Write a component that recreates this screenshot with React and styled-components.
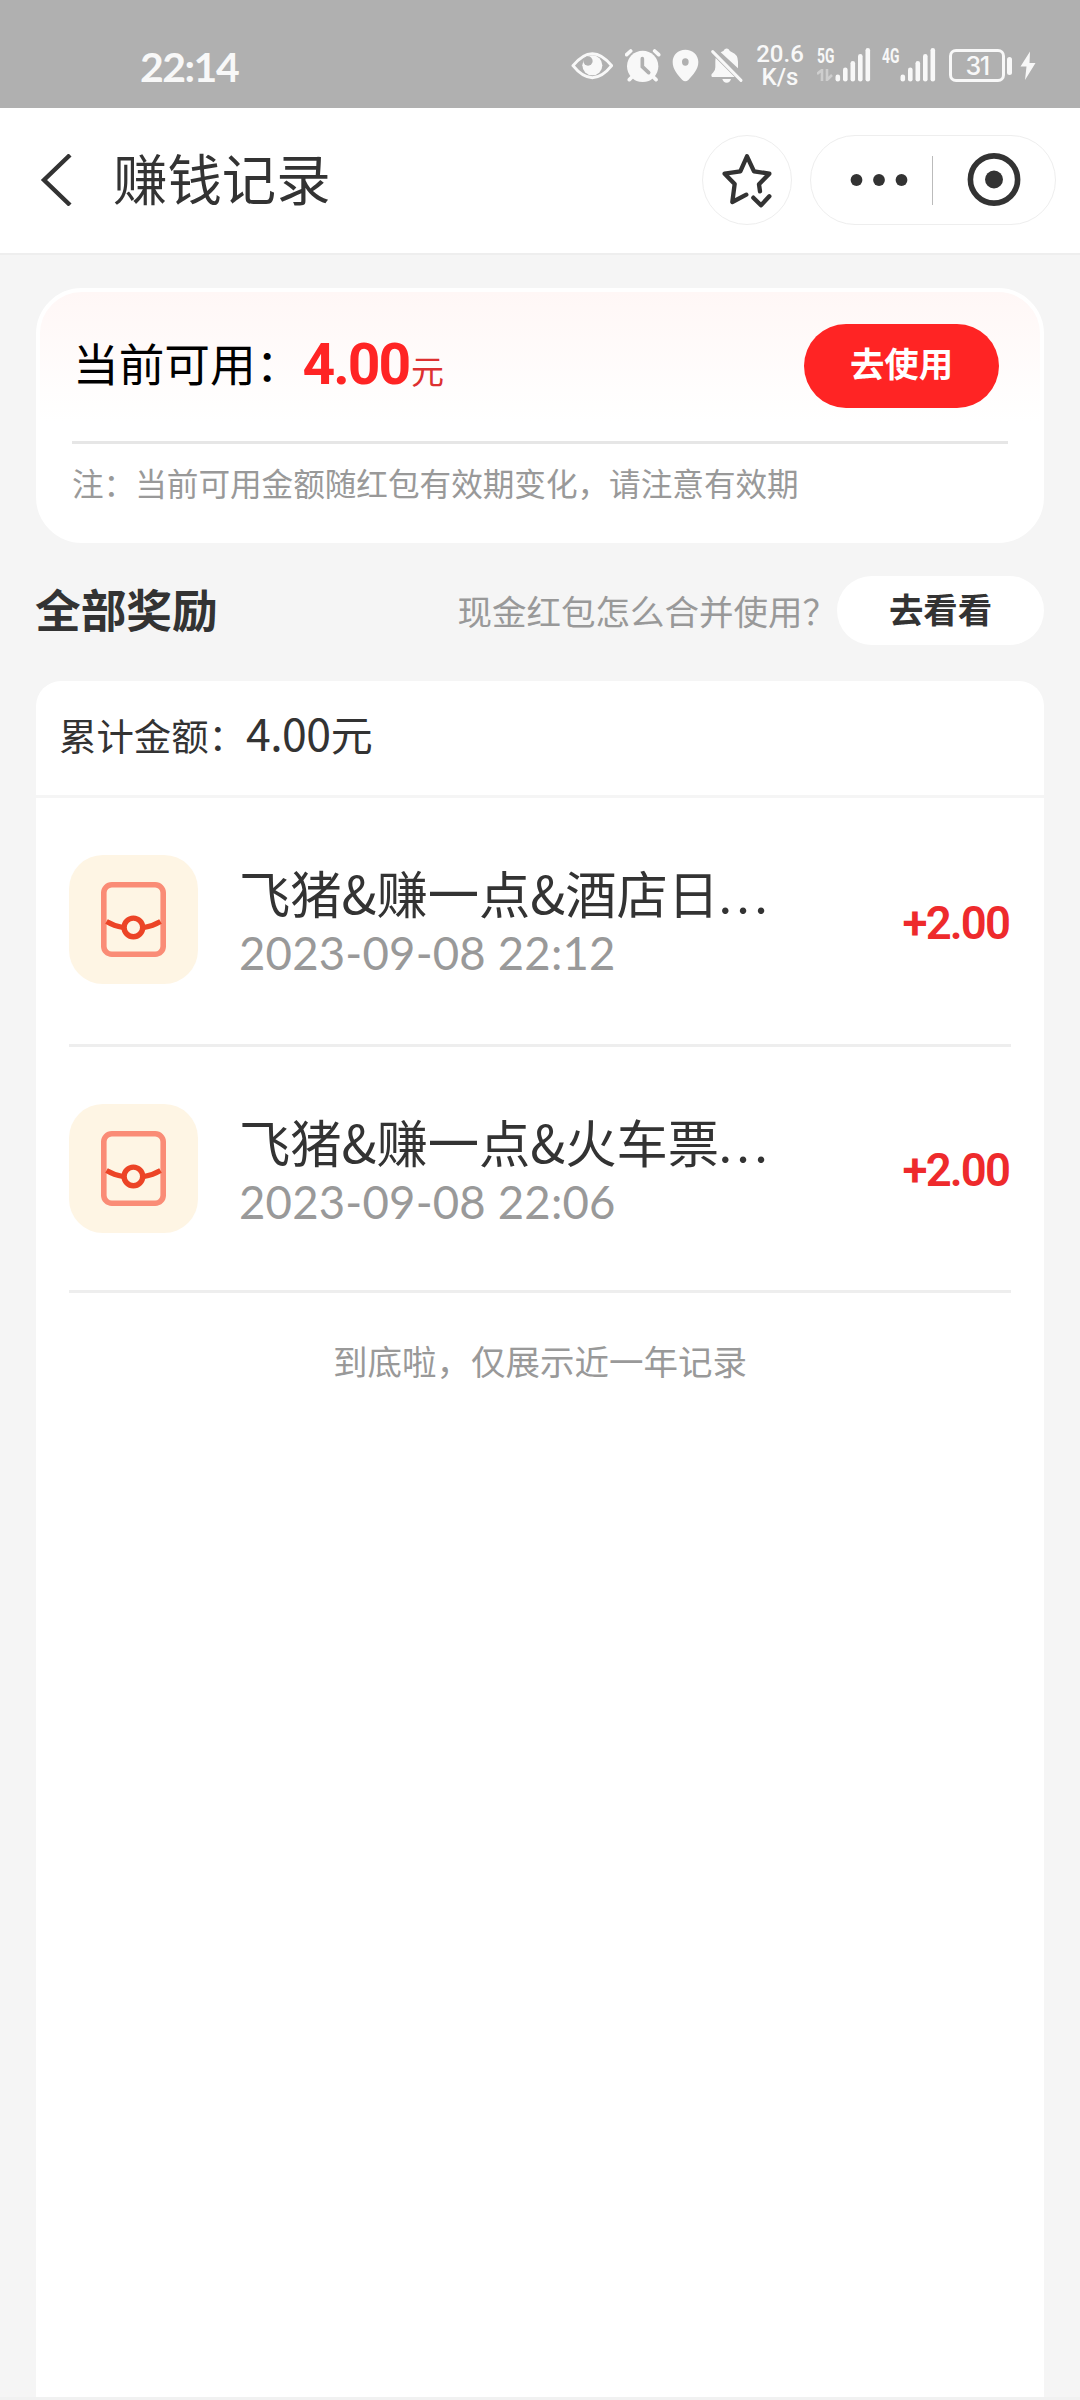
import React from 'react';
import styled, { createGlobalStyle } from 'styled-components';

const GlobalStyle = createGlobalStyle`
    * {
        box-sizing: border-box;
    }

    body {
        margin: 0;
        background: #f5f5f5;
        color: #333;
        font-family: "Noto Sans CJK SC", sans-serif;
    }
`

const Page = styled.div`
    width: 1080px;
    height: 2400px;
    display: flex;
    flex-direction: column;
    overflow: hidden;
    border-bottom: 3px solid #f1f1f1;
`

const StatusBar = styled.div`
    flex: none;
    height: 108px;
    padding: 47px 44px 0 140px;
    display: flex;
    align-items: flex-start;
    background: #b0b0b0;
    color: #f8f8f8;
`

const Time = styled.div`
    margin-right: auto;
    font: 700 41px/40px Lato, sans-serif;
    letter-spacing: -1.5px;
`

const StatusIcon = styled.svg`
    flex: none;
    display: block;
    width: ${props => props.$width}px;
    height: 36px;
    margin-left: ${props => props.$gap}px;
`

const Speed = styled.div`
    width: 50px;
    margin: -4px 0 0 11px;
    display: flex;
    flex-direction: column;
    align-items: center;
    font: 500 24px/23px Roboto, sans-serif;
`

const Network = styled.div`
    width: 18px;
    margin-left: ${props => props.$gap}px;
    font: 700 21px/18px Roboto, sans-serif;
    white-space: nowrap;
`

const NetworkName = styled.div`
    transform: scaleX(0.66);
    transform-origin: left;
`

const NetworkArrows = styled.svg`
    display: block;
    margin-top: 4px;
`

const Battery = styled.div`
    width: 56px;
    height: 33px;
    margin: 2px 0 0 13px;
    border: 3px solid #f8f8f8;
    border-radius: 7px;
    font: 500 25px/28px Inter, Roboto, sans-serif;
    letter-spacing: -1.5px;
    text-align: center;
`

const BatteryCap = styled.div`
    width: 5px;
    height: 18px;
    margin: 10px 0 0 2px;
    border-radius: 3px;
    background: #f8f8f8;
`

const Header = styled.div`
    flex: none;
    height: 147px;
    padding: 0 24px 1px 40px;
    display: flex;
    align-items: center;
    background: #fff;
    border-bottom: 2px solid #eee;
`

const Title = styled.div`
    margin: 0 auto 0 40px;
    padding-bottom: 6px;
    font-size: 54.4px;
    line-height: 60px;
`

const RoundButton = styled.div`
    width: 90px;
    height: 90px;
    display: flex;
    align-items: center;
    justify-content: center;
    border: 1px solid #eee;
    border-radius: 50%;
`

const Capsule = styled.div`
    width: 246px;
    height: 90px;
    margin-left: 18px;
    padding: 0 34px 0 39px;
    display: flex;
    align-items: center;
    justify-content: space-between;
    border: 1px solid #eee;
    border-radius: 45px;
`

const CapsuleLine = styled.div`
    width: 1px;
    height: 49px;
    margin-left: -11px;
    background: #bbb;
`

const Main = styled.div`
    flex: 1;
    padding: 33px 36px 0;
    display: flex;
    flex-direction: column;
`

const BalanceCard = styled.div`
    flex: none;
    height: 255px;
    padding: 0 32px;
    border: 4px solid #fff;
    border-radius: 46px;
    background: linear-gradient(#fff7f6, #fff 130px);
`

const BalanceRow = styled.div`
    height: 152px;
    padding: 0 9px 3px 1px;
    display: flex;
    align-items: center;
    border-bottom: 3px solid #e6e6e6;
`

const BalanceLabel = styled.div`
    padding-bottom: 6px;
    font-size: 45.7px;
    line-height: 60px;
    color: #000;
`

const BalanceValue = styled.div`
    margin: 0 auto 0 1px;
    padding-top: 4px;
    display: flex;
    align-items: baseline;
    font: 700 57px/60px Roboto, sans-serif;
    letter-spacing: -2px;
    color: #ff2424;
`

const Unit = styled.span`
    margin-left: 2px;
    font: 400 33px/60px "Noto Sans CJK SC", sans-serif;
    color: #dd3030;
`

const UseButton = styled.div`
    width: 195px;
    height: 84px;
    margin-top: 2px;
    padding-bottom: 9px;
    display: flex;
    align-items: center;
    justify-content: center;
    border-radius: 42px;
    background: #ff2424;
    color: #fff;
    font-size: 34.4px;
    font-weight: 700;
`

const Note = styled.div`
    padding-top: 13px;
    font-size: 31.6px;
    line-height: 50px;
    color: #999;
    white-space: nowrap;
`

const SectionHead = styled.div`
    flex: none;
    height: 138px;
    padding-bottom: 3px;
    display: flex;
    align-items: center;
`

const SectionTitle = styled.div`
    margin: 0 auto 0 -1px;
    padding-bottom: 5px;
    font-size: 45.7px;
    font-weight: 700;
`

const Question = styled.div`
    padding-bottom: 2px;
    font-size: 34.5px;
    color: #999;
    white-space: nowrap;
`

const LookButton = styled.div`
    width: 207px;
    height: 69px;
    padding-bottom: 6px;
    display: flex;
    align-items: center;
    justify-content: center;
    border-radius: 35px;
    background: #fff;
    font-size: 34.4px;
    font-weight: 700;
`

const RecordCard = styled.div`
    flex: 1;
    border-radius: 25px 25px 0 0;
    background: #fff;
`

const TotalRow = styled.div`
    height: 117px;
    padding: 0 23px 6px;
    display: flex;
    align-items: center;
    border-bottom: 3px solid #f5f5f5;
    font-size: 37.4px;
`

const TotalValue = styled.div`
    padding-bottom: 5px;
    display: flex;
    align-items: baseline;
    font-size: 42px;
    line-height: 60px;
`

const Digits = styled.span`
    font-size: 44.6px;
    letter-spacing: -0.5px;
`

const Record = styled.div`
    height: ${props => props.$height}px;
    margin: 0 33px;
    padding-top: ${props => props.$shift}px;
    display: flex;
    align-items: center;
    border-bottom: 3px solid #eee;
`

const RecordIcon = styled.div`
    flex: none;
    width: 129px;
    height: 129px;
    margin-bottom: 4px;
    display: flex;
    align-items: center;
    justify-content: center;
    border-radius: 34px;
    background: #fef5e4;
`

const RecordText = styled.div`
    margin: 0 auto 0 41px;
    padding-top: 2px;
`

const RecordName = styled.div`
    padding-top: 2px;
    font-size: 51.3px;
    line-height: 58px;
    white-space: nowrap;
`

const Dots = styled.span`
    font-family: Lato, sans-serif;
    letter-spacing: 5.8px;
`

const RecordDate = styled.div`
    font: 400 45.5px/60px Lato, sans-serif;
    letter-spacing: 0.2px;
    color: #999;
`

const Amount = styled.div`
    padding: ${props => 5 - props.$shift}px 2px 0 0;
    font: 600 45.5px/60px Roboto, sans-serif;
    letter-spacing: -1.9px;
    color: #ee2a2c;
`

const Footer = styled.div`
    margin-top: 42px;
    font-size: 34.5px;
    line-height: 50px;
    text-align: center;
    color: #999;
`

const records = [
    { name: '飞猪&赚一点&酒店日', date: '2023-09-08 22:12', amount: '+2.00', height: 249, shift: 0 },
    { name: '飞猪&赚一点&火车票', date: '2023-09-08 22:06', amount: '+2.00', height: 246, shift: 3 },
]

function Signal() {
    return (
        <StatusIcon $width={36} $gap={0} viewBox="0 0 36 36" fill="#f8f8f8">
            <rect x="0.5" y="27.5" width="4.6" height="7" rx="2.3" />
            <rect x="8" y="20.5" width="4.6" height="14" rx="2.3" />
            <rect x="15.5" y="14" width="4.6" height="20.5" rx="2.3" />
            <rect x="23" y="7" width="4.6" height="27.5" rx="2.3" />
            <rect x="30.5" y="1" width="4.6" height="33.5" rx="2.3" />
        </StatusIcon>
    )
}

function StatusIcons() {
    return (
        <>
            <StatusIcon $width={42} $gap={0} viewBox="93 81 126 108">
                <path d="M99 137 Q157 65 215 137 Q157 209 99 137Z" fill="none" stroke="#f8f8f8" strokeWidth="9" strokeLinejoin="round" />
                <circle cx="157" cy="136" r="30" fill="#f8f8f8" />
                <circle cx="144" cy="123" r="14" fill="#b0b0b0" />
            </StatusIcon>
            <StatusIcon $width={36} $gap={12} viewBox="255 81 108 108">
                <circle cx="308" cy="139" r="47" fill="#f8f8f8" />
                <path d="M260 104 L272 93 M344 93 L356 104 M268 179 L276 171 M340 171 L348 179" stroke="#f8f8f8" strokeWidth="11" strokeLinecap="round" />
                <path d="M307 116 V140 L326 158" fill="none" stroke="#b0b0b0" strokeWidth="11" strokeLinecap="round" />
            </StatusIcon>
            <StatusIcon $width={27} $gap={11} viewBox="396 81 81 108">
                <path fillRule="evenodd" d="M436 89 C414 89 398 105 398 126 C398 148 413 164 427 180 Q436 188 445 180 C459 164 475 148 475 126 C475 105 458 89 436 89Z M436 115 a10 11 0 1 1 0 22 a10 11 0 1 1 0 -22Z" fill="#f8f8f8" />
            </StatusIcon>
            <StatusIcon $width={34} $gap={11} viewBox="510 81 102 108">
                <path d="M542 97 Q552 94 554 88 Q560 83 566 88 Q568 94 576 97 Q594 104 594 125 V145Z" fill="#f8f8f8" />
                <path d="M527 114 L584 171 H516 Q511 164 519 158 Q526 153 526 142 V122Z" fill="#f8f8f8" />
                <path d="M547 177 H573 Q570 188 560 188 Q550 188 547 177Z" fill="#f8f8f8" />
                <path d="M518 95 L603 181" stroke="#f8f8f8" strokeWidth="9" strokeLinecap="round" />
            </StatusIcon>
        </>
    )
}

function PacketIcon() {
    return (
        <svg width="65" height="75" viewBox="0 0 65 75" fill="none">
            <rect x="2.8" y="2.8" width="59.4" height="69.4" rx="8" stroke="#fa8c76" strokeWidth="5.6" />
            <path d="M5.5 39.5 Q13 44 22 45.5 M43 45.5 Q52 44 59.5 39.5" stroke="#ec4426" strokeWidth="5" />
            <circle cx="32.4" cy="45.4" r="9.3" stroke="#ec4426" strokeWidth="5.4" />
        </svg>
    )
}

function App() {
    return (
        <Page>
            <GlobalStyle />
            <StatusBar>
                <Time>22:14</Time>
                <StatusIcons />
                <Speed>
                    <span>20.6</span>
                    <span>K/s</span>
                </Speed>
                <Network $gap={12}>
                    <NetworkName>5G</NetworkName>
                    <NetworkArrows width="16" height="12" viewBox="0 0 16 12" fill="none" stroke="#cecece" strokeWidth="2.6">
                        <path d="M0 5 L5 1 V12 M10 0 V11 L15 6" />
                    </NetworkArrows>
                </Network>
                <Signal />
                <Network $gap={11}>
                    <NetworkName>4G</NetworkName>
                </Network>
                <Signal />
                <Battery>31</Battery>
                <BatteryCap />
                <StatusIcon $width={16} $gap={8} viewBox="0 0 16 36" fill="#f8f8f8">
                    <path d="M10 4.5 L0.5 19.5 H6.5 L5 33 L15.5 16 H9.5Z" />
                </StatusIcon>
            </StatusBar>

            <Header>
                <svg width="33" height="52" viewBox="0 0 33 52" fill="none" stroke="#333" strokeWidth="4.4">
                    <path d="M30 1 L4 26 L30 51" />
                </svg>
                <Title>赚钱记录</Title>
                <RoundButton>
                    <svg width="50" height="56" viewBox="126 126 150 168" fill="none" stroke="#333" strokeWidth="13" strokeLinecap="round" strokeLinejoin="round">
                        <path d="M199 254 L157 276 L164 222 L134 191 L181 184 L201 139 L222 184 L268 191 L237 223 L240 244" />
                        <path d="M220 263 L243 286 L268 259" />
                    </svg>
                </RoundButton>
                <Capsule>
                    <svg width="58" height="12" viewBox="0 0 58 12" fill="#333">
                        <circle cx="6.5" cy="6" r="5.9" />
                        <circle cx="29" cy="6" r="5.9" />
                        <circle cx="51.5" cy="6" r="5.9" />
                    </svg>
                    <CapsuleLine />
                    <svg width="54" height="54" viewBox="0 0 54 54">
                        <circle cx="27" cy="26.5" r="23.6" fill="none" stroke="#333" strokeWidth="5.6" />
                        <circle cx="27" cy="26.5" r="9" fill="#333" />
                    </svg>
                </Capsule>
            </Header>

            <Main>
                <BalanceCard>
                    <BalanceRow>
                        <BalanceLabel>当前可用：</BalanceLabel>
                        <BalanceValue>4.00<Unit>元</Unit></BalanceValue>
                        <UseButton>去使用</UseButton>
                    </BalanceRow>
                    <Note>注：当前可用金额随红包有效期变化，请注意有效期</Note>
                </BalanceCard>

                <SectionHead>
                    <SectionTitle>全部奖励</SectionTitle>
                    <Question>现金红包怎么合并使用？</Question>
                    <LookButton>去看看</LookButton>
                </SectionHead>

                <RecordCard>
                    <TotalRow>
                        累计金额：
                        <TotalValue><Digits>4.00</Digits>元</TotalValue>
                    </TotalRow>
                    {records.map(record => (
                        <Record key={record.date} $height={record.height} $shift={record.shift}>
                            <RecordIcon><PacketIcon /></RecordIcon>
                            <RecordText>
                                <RecordName>{record.name}<Dots>...</Dots></RecordName>
                                <RecordDate>{record.date}</RecordDate>
                            </RecordText>
                            <Amount $shift={record.shift}>{record.amount}</Amount>
                        </Record>
                    ))}
                    <Footer>到底啦，仅展示近一年记录</Footer>
                </RecordCard>
            </Main>
        </Page>
    );
}


export default App;
